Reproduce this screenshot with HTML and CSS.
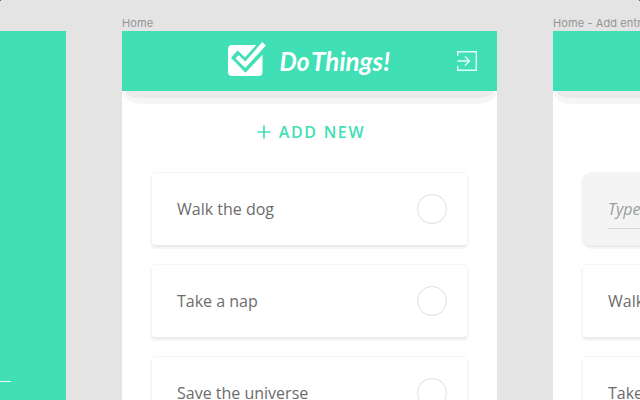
FILE: index.html
```html
<!DOCTYPE html>
<html lang="en">
<head>
<meta charset="utf-8">
<title>Do Things!</title>
<link rel="stylesheet" href="styles.css">
</head>
<body>
<main class="canvas">
  <span class="mark mark-left"></span>
  <span class="mark mark-right"></span>
  <section class="artboard login">
    <div class="label"></div>
    <div class="screen"><div class="field-line"></div></div>
  </section>
  <section class="artboard">
    <div class="label">Home</div>
    <div class="screen">
      <header class="topbar">
        <svg class="logo" width="165" height="46" viewBox="0 0 165 46">
          <rect x="1" y="7" width="34.500" height="31" rx="4" fill="#fff"/>
          <path d="M4 19.700L10.700 12.500L18 19.500L31 5H38V14L18.500 34.700Z" fill="#40dfb6"/>
          <path d="M8.500 20.500L11.700 17L18.200 23.500L35.300 4L38.800 7.500L18.300 30Z" fill="#fff"/>
          <text class="brand" x="52.500" y="33" textLength="30" lengthAdjust="spacingAndGlyphs">Do</text>
          <text class="brand" x="84" y="33" textLength="79" lengthAdjust="spacingAndGlyphs">Things!</text>
        </svg>
        <svg class="exit" width="22" height="22" viewBox="0 0 22 22" fill="none" stroke="#e4fff8" stroke-width="1.4">
          <path d="M1.700 6V1.700H20.300V20.300H1.700V16M1.500 11H13M9 6.500L13.500 11L9 15.500"/>
        </svg>
      </header>
      <div class="add">
        <svg width="14" height="14" viewBox="0 0 14 14" stroke="#40dfb6" stroke-width="1.7"><path d="M7 .5V13.500M.5 7H13.500"/></svg>
        <span>ADD NEW</span>
      </div>
      <div class="list">
        <div class="card"><span>Walk the dog</span><i class="check"></i></div>
        <div class="card"><span>Take a nap</span><i class="check"></i></div>
        <div class="card"><span>Save the universe</span><i class="check"></i></div>
      </div>
    </div>
  </section>
  <section class="artboard">
    <div class="label">Home - Add entry</div>
    <div class="screen">
      <header class="topbar"></header>
      <div class="add"></div>
      <div class="list">
        <div class="card entry"><span class="input">Type here</span></div>
        <div class="card"><span>Walk the dog</span></div>
        <div class="card"><span>Take a nap</span></div>
      </div>
    </div>
  </section>
</main>
</body>
</html>
```

FILE: styles.css
```css
* { box-sizing: border-box; }
body { margin: 0; background: #e4e4e4; font-family: "Open Sans", sans-serif; }
.canvas { position: relative; width: 640px; height: 400px; overflow: hidden; display: flex; gap: 56px; }
.mark { position: absolute; top: 0; width: 1px; height: 1px; background: #666; }
.mark-left { left: 0; }
.mark-right { right: 0; }
.artboard { flex: 0 0 375px; display: flex; flex-direction: column; }
.login { flex-basis: 66px; }
.label { height: 31px; padding-top: 16px; font: 11px/14px Inter, sans-serif; letter-spacing: .1px; color: #949494; white-space: nowrap; }
.screen { height: 369px; background: #fff; overflow: hidden; }
.login .screen { background: #40dfb6; padding-top: 350px; }
.field-line { width: 11px; height: 1px; background: #e2fff7; }
.topbar { position: relative; z-index: 0; height: 60px; display: flex; align-items: center; justify-content: space-between; padding: 0 19px 0 105px; background: #40dfb6; }
.topbar::before, .topbar::after { content: ""; position: absolute; z-index: -1; top: 60px; }
.topbar::before { left: 0; right: 0; height: 13px; background: #f5f5f5; border-radius: 0 0 20px 20px / 0 0 13px 13px; }
.topbar::after { left: 4px; right: 4px; height: 7px; background: #ebebeb; border-radius: 0 0 12px 12px / 0 0 7px 7px; }
.logo { margin-top: -1px; overflow: visible; }
.brand { font: italic 700 27px Lato, sans-serif; fill: #fff; }
.add { height: 82px; display: flex; align-items: center; justify-content: center; gap: 8px; padding-left: 3px; color: #40dfb6; font-size: 16px; font-weight: 600; letter-spacing: 1.7px; }
.list { display: flex; flex-direction: column; gap: 20px; padding: 0 30px; }
.card { height: 72px; flex: none; display: flex; align-items: center; justify-content: space-between; padding: 0 20px 0 25px; border-radius: 4px; background: #fff; color: #6c6c6c; font-size: 16px; box-shadow: 0 3px 0 -1px #ebebeb, 0 2px 0 2px #f5f5f5, 0 -1px 0 0 #f5f5f5; }
.check { width: 30px; height: 30px; border: 1px solid #dedede; border-radius: 50%; }
.entry { background: #f4f4f4; border-radius: 8px; }
.input { width: 265px; height: 40px; padding-top: 9px; border-bottom: 1px solid #d6d8d8; color: #999f9d; font-style: italic; line-height: 22px; }
```
